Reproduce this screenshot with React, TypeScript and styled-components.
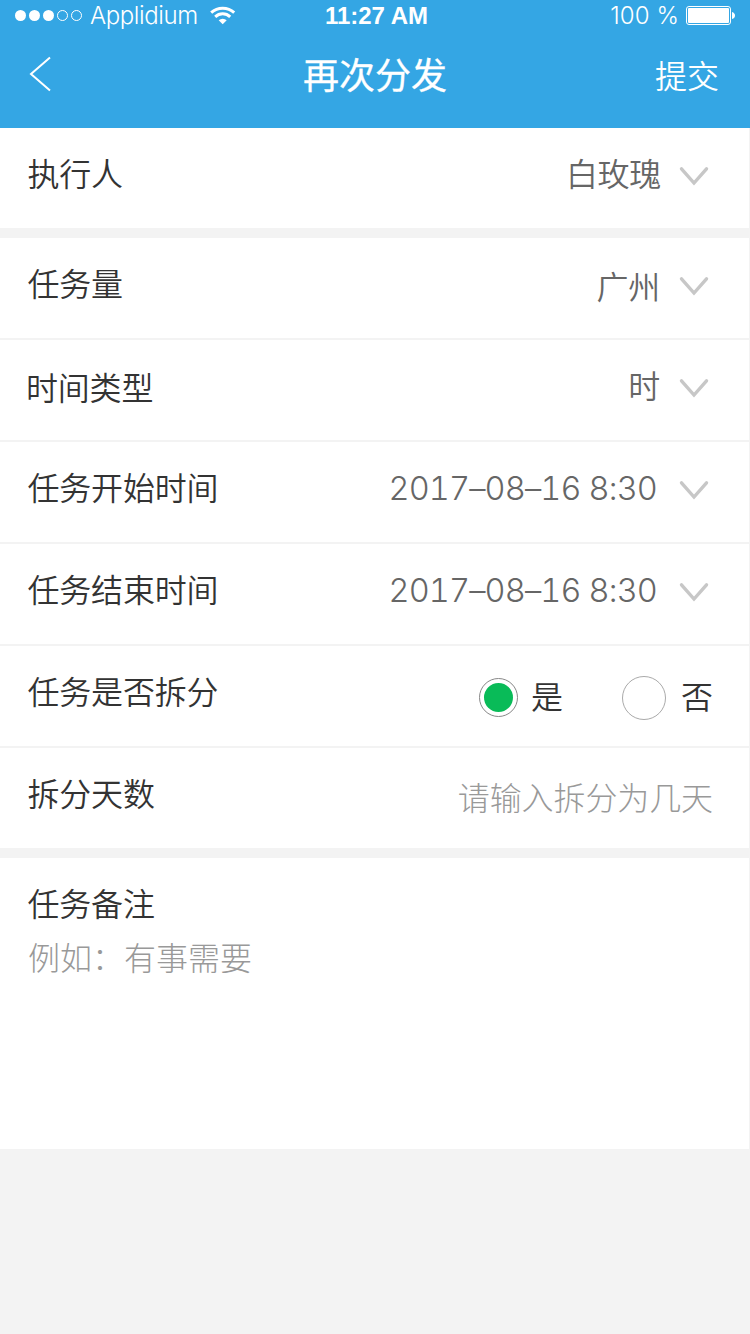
import React from 'react';
import styled, { createGlobalStyle } from 'styled-components';

const GlobalStyle = createGlobalStyle`
  * { box-sizing: border-box; }
  body {
    margin: 0;
    background: #f3f3f3;
    font-family: "Noto Sans CJK SC", sans-serif;
    font-weight: 350;
  }
`;

const Screen = styled.div`
  width: 750px;
  min-height: 1334px;
  background: #f3f3f3;
`;

const Header = styled.header`
  height: 128px;
  background: #34a6e4;
  color: #fff;
`;

const StatusBar = styled.div`
  display: grid;
  grid-template-columns: 1fr auto 1fr;
  align-items: center;
  height: 32px;
  padding: 0 15px 0 15px;
  font-family: "Liberation Sans", Arial, sans-serif;
  font-size: 24px;
  line-height: 32px;
`;

const StatusGroup = styled.div<{ $end?: boolean }>`
  display: flex;
  align-items: center;
  justify-content: ${(p) => (p.$end ? 'flex-end' : 'flex-start')};
`;

const Carrier = styled.span`
  margin: 0 12px 0 7px;
  font-family: Inter, sans-serif;
  font-weight: 300;
  font-size: 24px;
  line-height: 32px;
  letter-spacing: -0.4px;
`;

const Percent = styled(Carrier)`
  margin: 0 7px 0 0;
  letter-spacing: 0.1px;
`;

const Clock = styled.span`
  padding-left: 3px;
  font-weight: 700;
`;

const NavBar = styled.nav`
  display: grid;
  grid-template-columns: 1fr auto 1fr;
  align-items: center;
  height: 84px;
  padding: 0 31px 0 29px;
`;

const Title = styled.h1`
  margin: 0;
  padding: 0 0 2px 2px;
  font-size: 36px;
  font-weight: 400;
  line-height: 48px;
  -webkit-text-stroke: 0.3px #fff;
`;

const TextButton = styled.button`
  justify-self: end;
  padding: 0 0 1px;
  border: 0;
  background: none;
  color: inherit;
  font: inherit;
  font-size: 32px;
  line-height: 48px;
`;

const Section = styled.section`
  display: flex;
  flex-direction: column;
  gap: 2px;
  width: 749px;
  margin-bottom: 10px;
`;

const Row = styled.div`
  display: flex;
  justify-content: space-between;
  align-items: flex-start;
  height: 100px;
  padding: 0 40px 0 27px;
  background: #fff;
`;

const Label = styled.span<{ $top?: number; $shift?: number }>`
  padding-top: ${(p) => p.$top ?? 20}px;
  margin-left: ${(p) => p.$shift ?? 0.5}px;
  color: #333;
  font-size: 32px;
  line-height: 48px;
  letter-spacing: -0.2px;
`;

const Picker = styled.div`
  display: flex;
  align-items: flex-start;
`;

const Value = styled.span<{ $top?: number; $gap?: number }>`
  padding-top: ${(p) => p.$top ?? 20}px;
  margin-right: ${(p) => p.$gap ?? 19}px;
  color: #666;
  font-size: 32px;
  line-height: 48px;
  letter-spacing: -0.3px;
`;

const DateValue = styled(Value)`
  padding-top: 23px;
  margin-right: 22px;
  font-family: Inter, sans-serif;
  font-size: 32.5px;
  font-weight: 350;
  font-variant-numeric: tabular-nums;
  letter-spacing: -0.85px;
`;

const Arrow = styled.svg`
  margin-top: 38px;
`;

const RadioGroup = styled.div`
  display: flex;
  align-items: center;
  height: 100px;
  margin-right: -4px;
  padding-top: 3px;
  color: #333;
  font-size: 32px;
  line-height: 48px;
`;

const Radio = styled.span<{ $size: number; $checked?: boolean }>`
  width: ${(p) => p.$size}px;
  height: ${(p) => p.$size}px;
  margin-right: ${(p) => (p.$checked ? 13 : 15)}px;
  padding: 4px;
  border: 1px solid ${(p) => (p.$checked ? '#888' : '#aaa')};
  border-radius: 50%;
  background: ${(p) => (p.$checked ? '#09bb58' : '#fff')} content-box;
`;

const RadioText = styled.span<{ $gap?: number }>`
  margin-right: ${(p) => p.$gap ?? 0}px;
  padding-bottom: 5px;
`;

const Placeholder = styled.span`
  padding-top: 24px;
  margin-right: -4px;
  color: #999;
  font-size: 32px;
  font-weight: 300;
  line-height: 48px;
  letter-spacing: -0.1px;
`;

const Remark = styled.div`
  display: flex;
  flex-direction: column;
  height: 291px;
  padding: 0 27px;
  background: #fff;
`;

const RemarkHint = styled.span`
  margin: 6px 0 0 1px;
  color: #999;
  font-size: 32px;
  font-weight: 300;
  line-height: 48px;
`;

const Chevron = () => (
  <Arrow width="30" height="22" viewBox="0 0 30 22" fill="none" stroke="#c7c7c7" strokeWidth="3.4">
    <path d="M2.5 2.8 L15 17 L27.5 2.8" strokeLinecap="round" />
  </Arrow>
);

const Signal = () => (
  <svg width="68" height="12" viewBox="0 0 68 12">
    {[0, 1, 2].map((i) => (
      <circle key={i} cx={5.5 + i * 14} cy="5.5" r="5.5" fill="#fff" />
    ))}
    {[3, 4].map((i) => (
      <circle key={i} cx={5.5 + i * 14} cy="5.5" r="5" fill="none" stroke="#fff" />
    ))}
  </svg>
);

const Wifi = () => (
  <svg width="26" height="20" viewBox="0 0 26 20" fill="none" stroke="#fff" strokeWidth="3">
    <path d="M1.2 6.7 A17 17 0 0 1 24.2 6.7" />
    <path d="M5.2 10.8 A11 11 0 0 1 20.2 10.8" />
    <path d="M12.7 18.2 L8.7 14.3 A6 6 0 0 1 16.7 14.3 Z" fill="#fff" stroke="none" />
  </svg>
);

const Battery = () => (
  <svg width="49" height="20" viewBox="0 0 49 20">
    <rect x="0.5" y="0.5" width="44" height="18" rx="2.5" fill="none" stroke="#fff" />
    <rect x="2" y="2" width="41" height="15" rx="1" fill="#fff" />
    <path d="M46 6 Q49 7 49 9.5 Q49 12 46 13 Z" fill="#fff" />
  </svg>
);

export default function App() {
  return (
    <Screen>
      <GlobalStyle />
      <Header>
        <StatusBar>
          <StatusGroup>
            <Signal />
            <Carrier>Applidium</Carrier>
            <Wifi />
          </StatusGroup>
          <Clock>11:27 AM</Clock>
          <StatusGroup $end>
            <Percent>100 %</Percent>
            <Battery />
          </StatusGroup>
        </StatusBar>
        <NavBar>
          <svg width="24" height="36" viewBox="0 0 24 36" fill="none" stroke="#fff" strokeWidth="2">
            <path d="M21 1.5 L2 18 L21 34.5" />
          </svg>
          <Title>再次分发</Title>
          <TextButton>提交</TextButton>
        </NavBar>
      </Header>

      <Section>
        <Row>
          <Label>执行人</Label>
          <Picker><Value $gap={18}>白玫瑰</Value><Chevron /></Picker>
        </Row>
      </Section>

      <Section>
        <Row>
          <Label>任务量</Label>
          <Picker><Value $top={23}>广州</Value><Chevron /></Picker>
        </Row>
        <Row>
          <Label $top={22} $shift={-1}>时间类型</Label>
          <Picker><Value>时</Value><Chevron /></Picker>
        </Row>
        <Row>
          <Label>任务开始时间</Label>
          <Picker><DateValue>2017–08–16 8:30</DateValue><Chevron /></Picker>
        </Row>
        <Row>
          <Label>任务结束时间</Label>
          <Picker><DateValue>2017–08–16 8:30</DateValue><Chevron /></Picker>
        </Row>
        <Row>
          <Label>任务是否拆分</Label>
          <RadioGroup>
            <Radio $size={39} $checked />
            <RadioText $gap={59}>是</RadioText>
            <Radio $size={44} />
            <RadioText>否</RadioText>
          </RadioGroup>
        </Row>
        <Row>
          <Label>拆分天数</Label>
          <Placeholder>请输入拆分为几天</Placeholder>
        </Row>
      </Section>

      <Section>
        <Remark>
          <Label>任务备注</Label>
          <RemarkHint>例如：有事需要</RemarkHint>
        </Remark>
      </Section>
    </Screen>
  );
}
